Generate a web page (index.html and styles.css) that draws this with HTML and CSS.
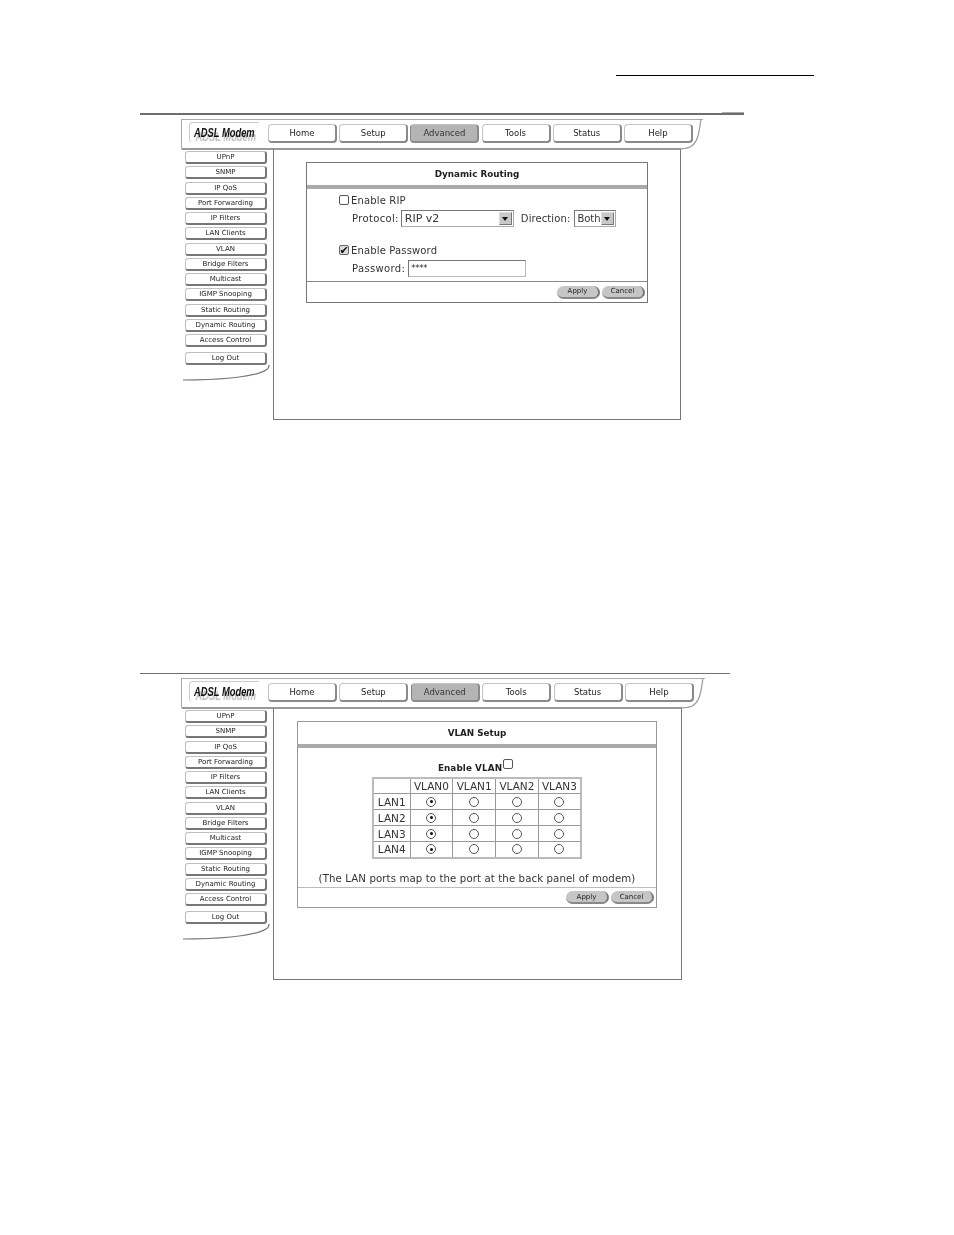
FILE: index.html
```html
<!DOCTYPE html>
<html lang="en">
<head>
<meta charset="utf-8">
<title>ADSL Modem manual page</title>
<link rel="stylesheet" href="styles.css">
</head>
<body>
<div class="header-link"></div>

<section class="shot shot-a">
  <div class="rule"></div>
  <div class="bar">
    <div class="logo"><span class="logo-text">ADSL Modem</span></div>
    <nav class="tabs">
      <span class="tab">Home</span><span class="tab">Setup</span><span class="tab active">Advanced</span><span class="tab">Tools</span><span class="tab">Status</span><span class="tab">Help</span>
    </nav>
    <svg class="bar-curve" width="30" height="31" viewBox="0 0 30 31"><path d="M27 0C25 14 24 24 16 28C12 30 8 30 2 30" fill="none" stroke="#999" stroke-width="1.2"/></svg>
  </div>
  <div class="columns">
    <aside class="side">
      <span class="side-btn">UPnP</span><span class="side-btn">SNMP</span><span class="side-btn">IP QoS</span><span class="side-btn">Port Forwarding</span><span class="side-btn">IP Filters</span><span class="side-btn">LAN Clients</span><span class="side-btn">VLAN</span><span class="side-btn">Bridge Filters</span><span class="side-btn">Multicast</span><span class="side-btn">IGMP Snooping</span><span class="side-btn">Static Routing</span><span class="side-btn">Dynamic Routing</span><span class="side-btn">Access Control</span><span class="side-btn logout">Log Out</span>
      <svg class="side-curve" width="90" height="16" viewBox="0 0 90 16"><path d="M1 15C30 15 72 13 84 5C86 4 87 2 87 0" fill="none" stroke="#777" stroke-width="1.2"/></svg>
    </aside>
    <main class="main">
      <div class="panel panel-a">
        <div class="panel-title">Dynamic Routing</div>
        <div class="panel-body body-a">
          <div class="row"><span class="check"></span><span class="label">Enable RIP</span></div>
          <div class="row row-indent row-protocol">
            <span class="label">Protocol:</span>
            <span class="select select-wide">RIP v2<i class="arrow"></i></span>
            <span class="label label-direction">Direction:</span>
            <span class="select select-small">Both<i class="arrow"></i></span>
          </div>
          <div class="row row-pass"><span class="check checked">&#10004;</span><span class="label">Enable Password</span></div>
          <div class="row row-indent row-password">
            <span class="label">Password:</span><span class="field">****</span>
          </div>
        </div>
        <div class="panel-foot"><span class="pill">Apply</span><span class="pill">Cancel</span></div>
      </div>
    </main>
  </div>
</section>

<section class="shot shot-b">
  <div class="rule"></div>
  <div class="bar">
    <div class="logo"><span class="logo-text">ADSL Modem</span></div>
    <nav class="tabs">
      <span class="tab">Home</span><span class="tab">Setup</span><span class="tab active">Advanced</span><span class="tab">Tools</span><span class="tab">Status</span><span class="tab">Help</span>
    </nav>
    <svg class="bar-curve" width="30" height="31" viewBox="0 0 30 31"><path d="M27 0C25 14 24 24 16 28C12 30 8 30 2 30" fill="none" stroke="#999" stroke-width="1.2"/></svg>
  </div>
  <div class="columns">
    <aside class="side">
      <span class="side-btn">UPnP</span><span class="side-btn">SNMP</span><span class="side-btn">IP QoS</span><span class="side-btn">Port Forwarding</span><span class="side-btn">IP Filters</span><span class="side-btn">LAN Clients</span><span class="side-btn">VLAN</span><span class="side-btn">Bridge Filters</span><span class="side-btn">Multicast</span><span class="side-btn">IGMP Snooping</span><span class="side-btn">Static Routing</span><span class="side-btn">Dynamic Routing</span><span class="side-btn">Access Control</span><span class="side-btn logout">Log Out</span>
      <svg class="side-curve" width="90" height="16" viewBox="0 0 90 16"><path d="M1 15C30 15 72 13 84 5C86 4 87 2 87 0" fill="none" stroke="#777" stroke-width="1.2"/></svg>
    </aside>
    <main class="main">
      <div class="panel panel-b">
        <div class="panel-title">VLAN Setup</div>
        <div class="panel-body body-b">
          <div class="vlan-enable"><span class="vlan-label">Enable VLAN</span><span class="check check-raised"></span></div>
          <table class="vlan">
            <tr><td class="name"></td><td>VLAN0</td><td>VLAN1</td><td>VLAN2</td><td>VLAN3</td></tr>
            <tr><td class="name">LAN1</td><td><i class="radio on"></i></td><td><i class="radio"></i></td><td><i class="radio"></i></td><td><i class="radio"></i></td></tr>
            <tr><td class="name">LAN2</td><td><i class="radio on"></i></td><td><i class="radio"></i></td><td><i class="radio"></i></td><td><i class="radio"></i></td></tr>
            <tr><td class="name">LAN3</td><td><i class="radio on"></i></td><td><i class="radio"></i></td><td><i class="radio"></i></td><td><i class="radio"></i></td></tr>
            <tr><td class="name">LAN4</td><td><i class="radio on"></i></td><td><i class="radio"></i></td><td><i class="radio"></i></td><td><i class="radio"></i></td></tr>
          </table>
          <p class="vlan-note">(The LAN ports map to the port at the back panel of modem)</p>
        </div>
        <div class="panel-foot"><span class="pill">Apply</span><span class="pill">Cancel</span></div>
      </div>
    </main>
  </div>
</section>
</body>
</html>
```

FILE: styles.css
```css
* { box-sizing: border-box; }
html, body { margin: 0; padding: 0; background: #fff; }
body { width: 954px; height: 1235px; overflow: hidden; font-family: "DejaVu Sans", sans-serif; color: #222; }

.header-link { width: 198px; height: 1px; margin: 75px 0 0 616px; background: #000; }

.shot { margin-left: 140px; filter: blur(0.4px); }
.shot-a { width: 604px; margin-top: 37px; }
.shot-b { width: 590px; margin-top: 253px; }

.rule { height: 2px; background: #6e6e6e; position: relative; }
.shot-a .rule::after { content: ""; position: absolute; right: 0; top: -1px; width: 22px; height: 1px; background: #aaa; }
.shot-b .rule { height: 1px; }

.bar { position: relative; display: flex; width: 522px; height: 29px; margin: 4px 0 0 41px; padding: 2px 0 0 7px; border-top: 1px solid #aaa; border-left: 1px solid #aaa; }
.shot-b .bar { width: 524px; margin-top: 4px; }
.bar-curve { position: absolute; right: -1px; top: -1px; }

.logo { width: 70px; height: 21px; margin-right: 9px; padding: 3px 0 0 4px; border-top: 1px solid #ccc; border-left: 1px solid #ccc; border-radius: 4px 0 0 4px; white-space: nowrap; line-height: 13px; }
.logo-text { display: block; width: 86px; transform: scaleX(0.72); transform-origin: left center; font: italic bold 13px/13px "Liberation Sans", sans-serif; color: #111; text-shadow: 2px 4px 1px #bbb; }

.tabs { display: flex; gap: 2.2px; height: 19px; margin-top: 2px; }
.shot-b .tabs { gap: 2.4px; }
.tab { display: flex; align-items: center; justify-content: center; width: 69px; border: 1px solid #c4c4c4; border-right: 2px solid #8a8a8a; border-bottom: 2px solid #8a8a8a; border-radius: 4px; font-size: 8.5px; color: #222; }
.tab.active { background: #b4b4b4; color: #333; border-left-color: #888; }

.columns { display: flex; }
.side { display: flex; flex-direction: column; gap: 2.25px; width: 92px; padding: 1px 0 0 3px; margin-left: 41px; border-top: 2px solid #999; border-left: 1px solid transparent; }
.side-btn { display: flex; align-items: center; justify-content: center; width: 82px; height: 13px; flex: none; border: 1px solid #c0c0c0; border-right: 2px solid #777; border-bottom: 2px solid #777; border-radius: 3px; font-size: 7px; color: #222; white-space: nowrap; }
.logout { margin-top: 2.25px; }
.side-curve { margin: -2px 0 0 -3px; flex: none; }

.main { width: 408px; height: 272px; padding-top: 12px; border: 1px solid #777; border-top-width: 2px; border-top-color: #999; }
.shot-b .main { width: 409px; height: 273px; }

.panel { display: flex; flex-direction: column; border: 1px solid #777; }
.panel-a { width: 342px; height: 141px; margin-left: 32px; }
.panel-b { width: 360px; height: 187px; margin-left: 23px; border-color: #999; }
.panel-title { height: 26px; flex: none; display: flex; align-items: center; justify-content: center; border-bottom: 4px solid #aaa; font-size: 8.8px; font-weight: bold; color: #222; }
.panel-body { flex: none; border-bottom: 1px solid #888; }
.body-a { height: 93px; padding: 5.5px 0 0 32px; }
.body-b { height: 140px; padding-top: 10.5px; border-bottom-color: #bbb; }

.row { display: flex; align-items: center; font-size: 10px; color: #333; }
.row-indent { padding-left: 13px; }
.row-protocol { margin-top: 4px; height: 17px; }
.row-pass { margin-top: 18px; }
.row-password { margin-top: 4px; height: 17px; }
.label { white-space: nowrap; margin-left: 2px; letter-spacing: 0.15px; }
.row-indent .label { margin-left: 0; letter-spacing: 0.35px; }
.row-indent .label-direction { margin-left: 7px; margin-right: 2px; letter-spacing: 0.1px; }

.check { display: inline-flex; align-items: center; justify-content: center; width: 10px; height: 10px; flex: none; border: 1px solid #555; border-radius: 2px; background: #fff; font-size: 11px; line-height: 1; color: #111; }
.checked { border-color: #666; background: #ddd; }

.select { position: relative; display: inline-block; height: 17px; margin-left: 2px; padding: 0 0 0 3px; border: 1px solid #777; border-right-color: #aaa; border-bottom-color: #aaa; font-size: 11px; line-height: 15px; color: #333; }
.select-wide { width: 113px; }
.select-small { width: 42px; padding-left: 2px; font-size: 10px; }
.arrow { position: absolute; right: 1px; top: 1px; width: 13px; height: 13px; background: #c8c8c8; border: 1px solid #777; border-top-color: #ddd; border-left-color: #ddd; }
.arrow::after { content: ""; position: absolute; left: 2px; top: 4px; border: 3.5px solid transparent; border-top: 4px solid #111; border-bottom: 0; }

.field { display: inline-block; width: 118px; height: 17px; margin-left: 3px; padding: 3px 0 0 2px; border: 1px solid #777; border-right-color: #bbb; border-bottom-color: #bbb; font-size: 8px; line-height: 10px; color: #222; }

.panel-foot { flex: 1; display: flex; align-items: center; justify-content: flex-end; gap: 2px; padding-right: 2px; }
.pill { display: flex; align-items: center; justify-content: center; width: 43px; height: 13px; border-radius: 7px; border-right: 2px solid #777; border-bottom: 2px solid #888; background: #c6c6c6; font-size: 7px; color: #222; }

.vlan-enable { display: flex; align-items: flex-start; justify-content: center; height: 18px; padding-right: 3px; }
.vlan-label { margin-top: 4px; font-size: 8.8px; font-weight: bold; letter-spacing: 0.1px; color: #222; }
.check-raised { margin-left: 1px; }

.vlan { width: 210px; height: 81px; margin: 0 0 0 74px; border-collapse: collapse; table-layout: fixed; border: 2px solid #bbb; }
.vlan td { padding: 0; height: 16px; border: 1px solid #999; text-align: center; font-size: 10.5px; color: #333; }
.vlan td.name { width: 37px; }
.radio { display: block; position: relative; width: 10px; height: 10px; margin: 0 auto; border: 1px solid #555; border-radius: 50%; }
.radio.on::after { content: ""; position: absolute; left: 2.5px; top: 2.5px; width: 3px; height: 3px; border-radius: 50%; background: #111; }

.vlan-note { margin: 14px 0 0; text-align: center; font-size: 10.2px; letter-spacing: 0.1px; color: #333; white-space: nowrap; }
```
